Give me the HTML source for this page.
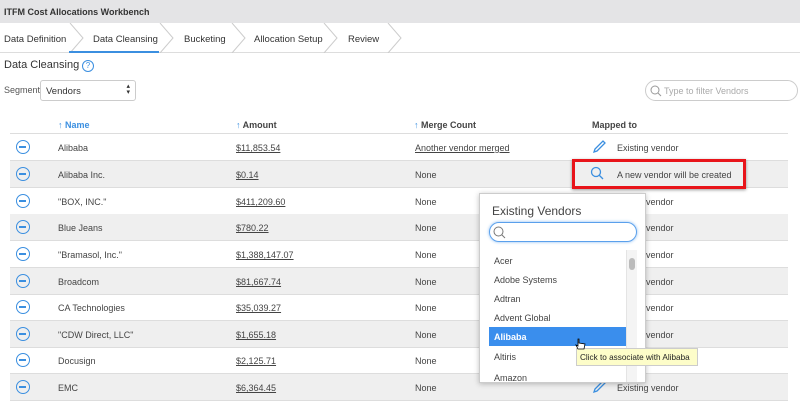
<!DOCTYPE html><html><head><style>
*{box-sizing:border-box;margin:0;padding:0}
body{width:800px;height:402px;overflow:hidden;background:#fff;font-family:"Liberation Sans",sans-serif;font-size:9px;color:#444;position:relative}
.a{position:absolute}
.hdr{left:0;top:0;width:800px;height:23px;background:#e4e4e6;font-weight:bold;font-size:9px;color:#333;padding:7px 4px}
.tabs{left:0;top:23px;width:800px;height:30px;border-bottom:1px solid #ddd}
.tab{top:11px;font-size:9.5px;color:#333}
.row{left:10px;width:778px;height:27px;border-bottom:1px solid #ddd}
.row.g{background:#efefef}
.c{top:9px;font-size:9px;color:#444;white-space:nowrap}
.u{text-decoration:underline}
.min{left:6px;top:6px;width:14px;height:14px;border:1.5px solid #3b8fe0;border-radius:50%}
.min:after{content:"";position:absolute;left:2px;top:5px;width:7px;height:1.5px;background:#3b8fe0}
.th{top:120px;font-weight:bold;font-size:9px;color:#444}
.blue{color:#3b8fe0}
</style></head><body>
<div class="a hdr">ITFM Cost Allocations Workbench</div>
<div class="a tabs">
<svg class="a" style="left:0;top:0" width="800" height="30"><g fill="none" stroke="#ccc"><path d="M70 0L83 15L70 30M160 0L173 15L160 30M232 0L245 15L232 30M324 0L337 15L324 30M388 0L401 15L388 30"/></g><path d="M69 29H159" stroke="#3b8fe0" stroke-width="2"/></svg>
<div class="a tab" style="left:4px">Data Definition</div>
<div class="a tab" style="left:93px">Data Cleansing</div>
<div class="a tab" style="left:184px">Bucketing</div>
<div class="a tab" style="left:254px">Allocation Setup</div>
<div class="a tab" style="left:348px">Review</div>
</div>
<div class="a" style="left:4px;top:59px;font-size:11px;color:#333">Data Cleansing</div>
<div class="a" style="left:82px;top:60px;width:12px;height:12px;border:1px solid #3b8fe0;border-radius:50%;color:#3b8fe0;font-size:8px;text-align:center;line-height:10px">?</div>
<div class="a" style="left:4px;top:85px;font-size:9px;color:#555">Segment</div>
<div class="a" style="left:40px;top:80px;width:96px;height:21px;border:1px solid #ccc;border-radius:3px;padding:5px 5px;font-size:9.5px;color:#333">Vendors<span style="position:absolute;right:5px;top:3px;font-size:7px;line-height:6px">▴<br>▾</span></div>
<div class="a" style="left:645px;top:80px;width:153px;height:21px;border:1px solid #ccc;border-radius:11px;padding:5px 0 0 18px;font-size:9px;color:#aaa">Type to filter Vendors
<svg class="a" style="left:4px;top:4px" width="12" height="12"><circle cx="5" cy="5" r="4" fill="none" stroke="#999"/><path d="M8 8L11 11" stroke="#999"/></svg></div>
<div class="a th blue" style="left:58px">↑ Name</div>
<div class="a th" style="left:236px"><span class="blue">↑</span> Amount</div>
<div class="a th" style="left:414px"><span class="blue">↑</span> Merge Count</div>
<div class="a th" style="left:592px">Mapped to</div>
<div class="a" style="left:10px;top:133px;width:778px;height:1px;background:#ddd"></div>

<div class="a row" style="top:134px"><div class="a min"></div><div class="a c" style="left:48px">Alibaba</div><div class="a c u" style="left:226px">$11,853.54</div><div class="a c u" style="left:405px">Another vendor merged</div><svg class="a" style="left:582px;top:6px" width="14" height="14"><path d="M2 12L3 9L11 1L13 3L5 11Z" fill="none" stroke="#3b8fe0" stroke-width="1.3"/></svg><div class="a c" style="left:607px">Existing vendor</div></div>
<div class="a row g" style="top:161px"><div class="a min"></div><div class="a c" style="left:48px">Alibaba Inc.</div><div class="a c u" style="left:226px">$0.14</div><div class="a c" style="left:405px">None</div><svg class="a" style="left:580px;top:5px" width="14" height="14"><circle cx="6" cy="6" r="4.5" fill="none" stroke="#3b8fe0" stroke-width="1.3"/><path d="M9 9L13 13" stroke="#3b8fe0" stroke-width="1.3"/></svg><div class="a c" style="left:607px">A new vendor will be created</div></div>
<div class="a row" style="top:188px"><div class="a min"></div><div class="a c" style="left:48px">"BOX, INC."</div><div class="a c u" style="left:226px">$411,209.60</div><div class="a c" style="left:405px">None</div><div class="a c" style="left:636px">vendor</div></div>
<div class="a row g" style="top:214px"><div class="a min"></div><div class="a c" style="left:48px">Blue Jeans</div><div class="a c u" style="left:226px">$780.22</div><div class="a c" style="left:405px">None</div><div class="a c" style="left:636px">vendor</div></div>
<div class="a row" style="top:241px"><div class="a min"></div><div class="a c" style="left:48px">"Bramasol, Inc."</div><div class="a c u" style="left:226px">$1,388,147.07</div><div class="a c" style="left:405px">None</div><div class="a c" style="left:636px">vendor</div></div>
<div class="a row g" style="top:268px"><div class="a min"></div><div class="a c" style="left:48px">Broadcom</div><div class="a c u" style="left:226px">$81,667.74</div><div class="a c" style="left:405px">None</div><div class="a c" style="left:636px">vendor</div></div>
<div class="a row" style="top:294px"><div class="a min"></div><div class="a c" style="left:48px">CA Technologies</div><div class="a c u" style="left:226px">$35,039.27</div><div class="a c" style="left:405px">None</div><div class="a c" style="left:636px">vendor</div></div>
<div class="a row g" style="top:321px"><div class="a min"></div><div class="a c" style="left:48px">"CDW Direct, LLC"</div><div class="a c u" style="left:226px">$1,655.18</div><div class="a c" style="left:405px">None</div><div class="a c" style="left:636px">vendor</div></div>
<div class="a row" style="top:347px"><div class="a min"></div><div class="a c" style="left:48px">Docusign</div><div class="a c u" style="left:226px">$2,125.71</div><div class="a c" style="left:405px">None</div></div>
<div class="a row g" style="top:374px"><div class="a min"></div><div class="a c" style="left:48px">EMC</div><div class="a c u" style="left:226px">$6,364.45</div><div class="a c" style="left:405px">None</div><svg class="a" style="left:582px;top:6px" width="14" height="14"><path d="M2 12L3 9L11 1L13 3L5 11Z" fill="none" stroke="#3b8fe0" stroke-width="1.3"/></svg><div class="a c" style="left:607px">Existing vendor</div></div>

<div class="a" style="left:572px;top:159px;width:174px;height:30px;border:3px solid #e8141a;box-shadow:0 1px 3px rgba(0,0,0,.4)"></div>

<div class="a" style="left:479px;top:193px;width:167px;height:190px;background:#fff;border:1px solid #ccc;box-shadow:0 1px 5px rgba(0,0,0,.25);overflow:hidden">
<div class="a" style="left:12px;top:10px;font-size:12px;color:#444">Existing Vendors</div>
<div class="a" style="left:9px;top:28px;width:148px;height:20px;border:1.5px solid #5aa0ec;border-radius:10px;box-shadow:0 0 3px #8bbcf2"><svg class="a" style="left:3px;top:3px" width="13" height="13"><circle cx="5.5" cy="5.5" r="4.5" fill="none" stroke="#777"/><path d="M8.5 8.5L12 12" stroke="#777"/></svg></div>
<div class="a" style="left:146px;top:56px;width:11px;height:150px;background:#f4f4f4;border-left:1px solid #e4e4e4"><div class="a" style="left:2px;top:8px;width:6px;height:12px;border-radius:3px;background:#bbb"></div></div>
<div class="a c" style="left:14px;top:62px">Acer</div>
<div class="a c" style="left:14px;top:81px">Adobe Systems</div>
<div class="a c" style="left:14px;top:100px">Adtran</div>
<div class="a c" style="left:14px;top:119px">Advent Global</div>
<div class="a" style="left:9px;top:133px;width:137px;height:19px;background:#3a8eed;color:#fff;font-weight:bold;padding:5px 5px">Alibaba</div>
<div class="a c" style="left:14px;top:158px">Altiris</div>
<div class="a c" style="left:14px;top:179px">Amazon</div>
</div>
<div class="a" style="left:576px;top:348px;width:122px;height:18px;background:#fdfdc9;border:1px solid #ccc;font-size:8.2px;color:#222;padding:4px 3px;white-space:nowrap">Click to associate with Alibaba</div>
<svg class="a" style="left:574px;top:338px" width="12" height="13"><path d="M4 1V8L2 7L4 11H10L11 6L5 5V1Z" fill="#fff" stroke="#000" stroke-width=".8"/></svg>
</body></html>
